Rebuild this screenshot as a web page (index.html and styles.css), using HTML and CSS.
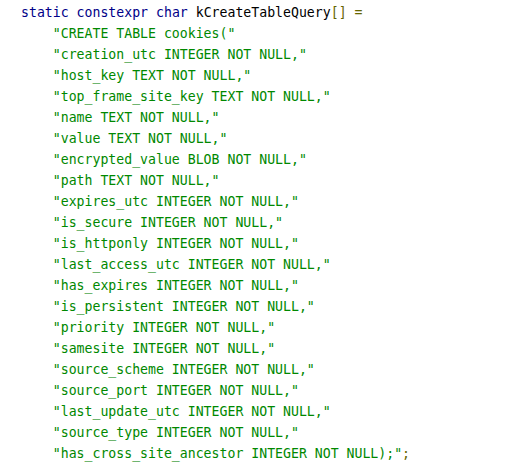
FILE: index.html
```html
<!DOCTYPE html>
<html>
<head>
<meta charset="utf-8">
<link rel="stylesheet" href="styles.css">
</head>
<body>
<pre class="code"><span class="kwd">static</span> <span class="kwd">constexpr</span> <span class="kwd">char</span> kCreateTableQuery<span class="pun">[]</span> <span class="pun">=</span>
    <span class="str">"CREATE TABLE cookies("</span>
    <span class="str">"creation_utc INTEGER NOT NULL,"</span>
    <span class="str">"host_key TEXT NOT NULL,"</span>
    <span class="str">"top_frame_site_key TEXT NOT NULL,"</span>
    <span class="str">"name TEXT NOT NULL,"</span>
    <span class="str">"value TEXT NOT NULL,"</span>
    <span class="str">"encrypted_value BLOB NOT NULL,"</span>
    <span class="str">"path TEXT NOT NULL,"</span>
    <span class="str">"expires_utc INTEGER NOT NULL,"</span>
    <span class="str">"is_secure INTEGER NOT NULL,"</span>
    <span class="str">"is_httponly INTEGER NOT NULL,"</span>
    <span class="str">"last_access_utc INTEGER NOT NULL,"</span>
    <span class="str">"has_expires INTEGER NOT NULL,"</span>
    <span class="str">"is_persistent INTEGER NOT NULL,"</span>
    <span class="str">"priority INTEGER NOT NULL,"</span>
    <span class="str">"samesite INTEGER NOT NULL,"</span>
    <span class="str">"source_scheme INTEGER NOT NULL,"</span>
    <span class="str">"source_port INTEGER NOT NULL,"</span>
    <span class="str">"last_update_utc INTEGER NOT NULL,"</span>
    <span class="str">"source_type INTEGER NOT NULL,"</span>
    <span class="str">"has_cross_site_ancestor INTEGER NOT NULL);"</span><span class="pun">;</span></pre>
</body>
</html>
```
FILE: styles.css
```css
html, body {
  margin: 0;
  padding: 0;
  background: #ffffff;
}
body {
  padding: 2px 0 0 21px;
}
.code {
  margin: 0;
  font-family: "DejaVu Sans Mono", monospace;
  font-size: 13.2px;
  line-height: 21px;
  color: #000000;
  white-space: pre;
}
.kwd { color: #000088; }
.str { color: #008800; }
.pun { color: #666600; }
```
